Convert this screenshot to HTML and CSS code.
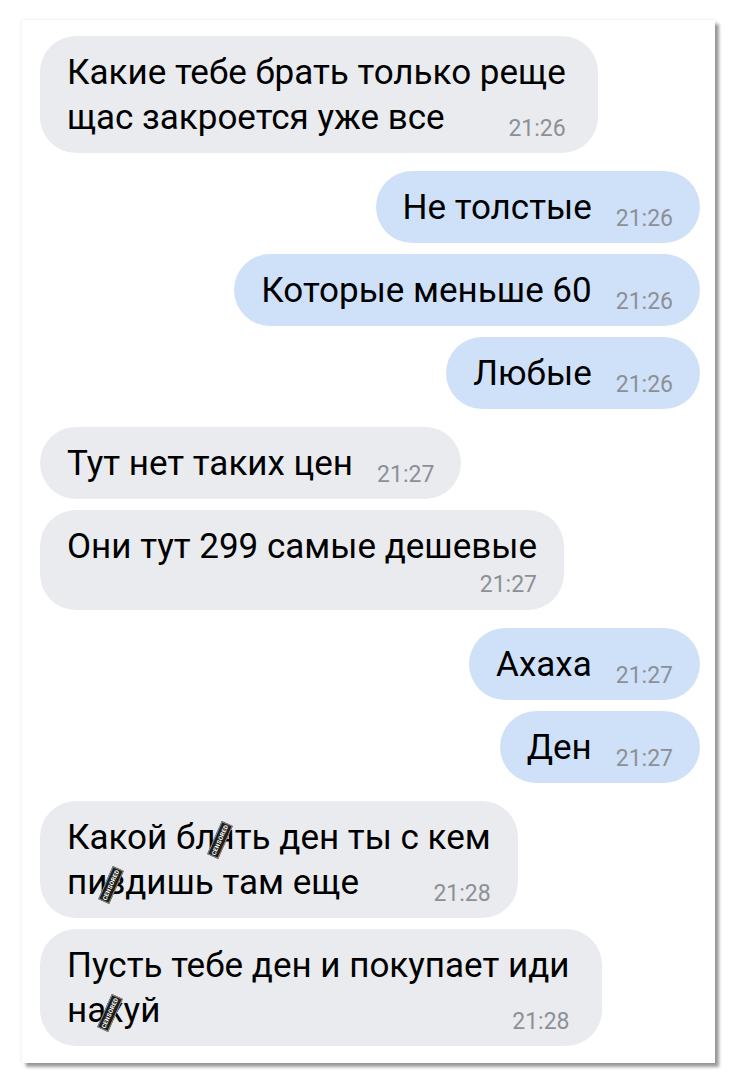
FILE: index.html
```html
<!DOCTYPE html>
<html lang="ru">
<head>
    <meta charset="UTF-8" />
    <meta name="viewport" content="width=device-width, initial-scale=1" />
    <title>Переписка</title>
    <link rel="stylesheet" href="styles.css">
</head>
<body>

    <div class="chat">
        <div class="msg in wide">
            <span class="text">Какие тебе брать только реще<br>щас закроется уже все</span><span class="time">21:26</span>
        </div>

        <div class="msg out group">
            <span class="text">Не толстые</span><span class="time">21:26</span>
        </div>
        <div class="msg out">
            <span class="text">Которые меньше 60</span><span class="time">21:26</span>
        </div>
        <div class="msg out">
            <span class="text">Любые</span><span class="time">21:26</span>
        </div>

        <div class="msg in group">
            <span class="text">Тут нет таких цен</span><span class="time">21:27</span>
        </div>
        <div class="msg in">
            <span class="text">Они тут 299 самые дешевые</span><span class="time own-line">21:27</span>
        </div>

        <div class="msg out group">
            <span class="text">Ахаха</span><span class="time">21:27</span>
        </div>
        <div class="msg out">
            <span class="text">Ден</span><span class="time">21:27</span>
        </div>

        <div class="msg in group">
            <span class="text">Какой бл<span class="cens">я<span class="sticker">CENSORED</span></span>ть ден ты с кем<br>пи<span class="cens">з<span class="sticker">CENSORED</span></span>дишь там еще</span><span class="time">21:28</span>
        </div>
        <div class="msg in wide">
            <span class="text">Пусть тебе ден и покупает иди<br>на<span class="cens">х<span class="sticker">CENSORED</span></span>уй</span><span class="time">21:28</span>
        </div>
    </div>

</body>
</html>
```

FILE: styles.css
```css
body {
    font-family: Roboto, "Liberation Sans", Arial, sans-serif;
    background-color: #fff;
    margin: 0;
    padding: 20px 23px 20px 22px;
    color: #000;
}

.chat {
    display: flex;
    flex-direction: column;
    gap: 11px;
    background-color: #fff;
    padding: 16px 15px 17px 18px;
    box-shadow: 4px 4px 3px rgba(0, 0, 0, 0.38), 0 0 3px rgba(0, 0, 0, 0.12);
}

.msg {
    max-width: 560px;
    padding: 14px 27px 13px 27px;
    border-radius: 36px;
    font-size: 35px;
    line-height: 45px;
}

.msg.wide {
    padding-right: 32px;
}

.msg.in {
    align-self: flex-start;
    background-color: #e9ebef;
}

.msg.out {
    align-self: flex-end;
    background-color: #cfe1f9;
}

.msg.group {
    margin-top: 7px;
}

.time {
    float: right;
    margin: 23px 0 0 24px;
    font-size: 23px;
    line-height: 22px;
    color: #8c9096;
}

.time.own-line {
    float: none;
    display: block;
    text-align: right;
    margin: 5px 0 1px 0;
}

.cens {
    position: relative;
}

.sticker {
    position: absolute;
    left: -14px;
    top: 17px;
    width: 34px;
    height: 10px;
    background-color: #1e1e1e;
    color: #fff;
    font-size: 6px;
    line-height: 10px;
    font-weight: 700;
    text-align: center;
    letter-spacing: 0.3px;
    transform: rotate(-66deg);
    border: 1px solid #888;
}
```
